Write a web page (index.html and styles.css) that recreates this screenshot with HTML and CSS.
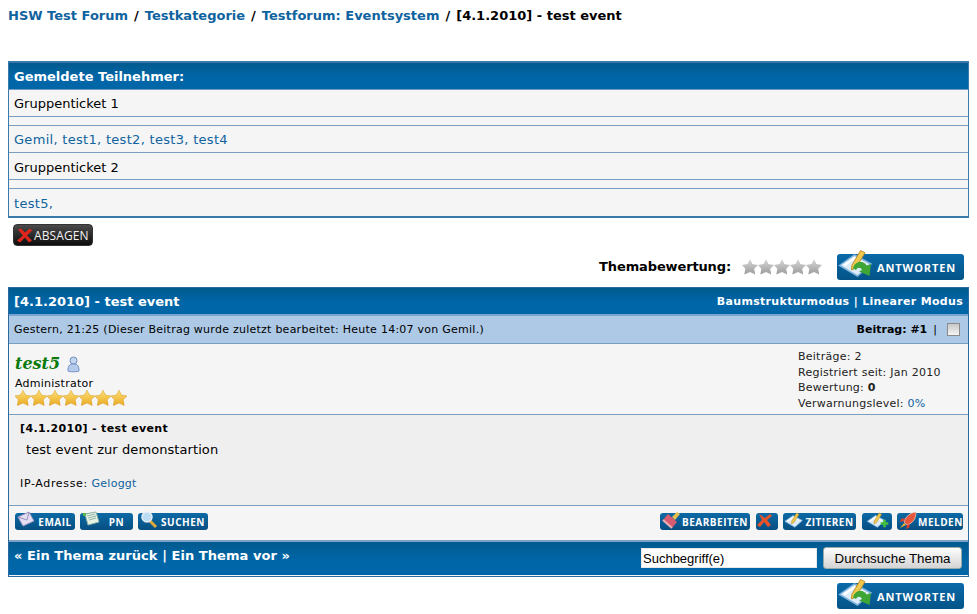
FILE: index.html
```html
<!DOCTYPE html>
<html lang="de">
<head>
<meta charset="utf-8">
<title>[4.1.2010] - test event</title>
<link rel="stylesheet" href="styles.css">
</head>
<body>
<svg class="defs" width="0" height="0" aria-hidden="true">
  <defs>
    <linearGradient id="gold" x1="0" y1="0" x2="0" y2="1"><stop offset="0" stop-color="#ffe27a"/><stop offset="1" stop-color="#e9a820"/></linearGradient>
    <linearGradient id="grey" x1="0" y1="0" x2="0" y2="1"><stop offset="0" stop-color="#d8d8d8"/><stop offset="1" stop-color="#9c9c9c"/></linearGradient>
    <symbol id="star" viewBox="0 0 16 16"><path d="M8 .2l2.500 4.900 5.500.8-3.800 3.900 1 5.700L8 13l-5.700 2.500 1-5.700L0 5.900l5.500-.8z"/></symbol>
    <symbol id="paper" viewBox="0 0 24 20"><path d="M1 11 11 4l11 6-9 8z" fill="#dcecfa" stroke="#7fb2dc"/><path d="M4 11l7-5 7 4" fill="none" stroke="#fff" stroke-width="1.500"/></symbol>
    <symbol id="pencil" viewBox="0 0 24 20"><path d="M15 1l3 1.500-6 10-3 1.500.2-3z" fill="#f0c850" stroke="#b98a20" stroke-width=".6"/></symbol>
    <symbol id="reply" viewBox="0 0 24 20"><use href="#paper"/><use href="#pencil"/><path d="M10 13c1-5 7-6 9-2l3-1-1 8-7-3 2-1c-1-2-3-2-4 0z" fill="#3fa535"/></symbol>
  </defs>
</svg>
<div class="page">
  <nav class="crumbs"><a href="#">HSW Test Forum</a><span class="sep">/</span><a href="#">Testkategorie</a><span class="sep">/</span><a href="#">Testforum: Eventsystem</a><span class="sep">/</span><span class="current">[4.1.2010] - test event</span></nav>

  <section class="box attendees">
    <h2 class="bar">Gemeldete Teilnehmer:</h2>
    <div class="row">Gruppenticket 1</div>
    <div class="spacer"></div>
    <div class="row"><a class="names" href="#">Gemil, test1, test2, test3, test4</a></div>
    <div class="row tall">Gruppenticket 2</div>
    <div class="spacer"></div>
    <div class="row last"><a class="names" href="#">test5,</a></div>
  </section>

  <div class="cancel-line">
    <a class="btn-cancel" href="#">
      <svg width="16" height="15" viewBox="0 0 16 14"><path d="M1 1l3-1 4 4 5-4 2 2-5 5 5 5-3 2-4-5-5 5-3-2 6-5z" fill="#e0261c"/></svg>
      ABSAGEN
    </a>
  </div>

  <div class="rating-line">
    <strong class="rating-label">Themabewertung:</strong>
    <span class="stars grey">
      <svg><use href="#star"/></svg><svg><use href="#star"/></svg><svg><use href="#star"/></svg><svg><use href="#star"/></svg><svg><use href="#star"/></svg>
    </span>
    <a class="btn-big" href="#">
      <svg class="big-icon" width="36" height="30"><use href="#reply"/></svg>
      <span>ANTWORTEN</span>
    </a>
  </div>

  <section class="box post">
    <header class="bar post-head">
      <strong>[4.1.2010] - test event</strong>
      <span class="modes"><a href="#">Baumstrukturmodus</a> | <a href="#">Linearer Modus</a></span>
    </header>
    <div class="meta">
      <span class="wide">Gestern, 21:25 (Dieser Beitrag wurde zuletzt bearbeitet: Heute 14:07 von Gemil.)</span>
      <span class="meta-right"><strong>Beitrag: #1</strong> <i class="pipe">|</i> <input class="check" type="checkbox" aria-label="auswählen"></span>
    </div>
    <div class="profile">
      <div class="author">
        <div class="name-line"><a class="name" href="#">test5</a>
          <svg width="13" height="17" viewBox="0 0 13 17"><circle cx="6.500" cy="4.500" r="3.500" fill="#c3d5ef" stroke="#6f8fc4"/><path d="M1 15c0-6 2-7 5.500-7s5.500 1 5.500 7c0 1-11 1-11 0z" fill="#b4cbec" stroke="#6f8fc4"/></svg>
        </div>
        <div class="role wide">Administrator</div>
        <div class="stars gold">
          <svg><use href="#star"/></svg><svg><use href="#star"/></svg><svg><use href="#star"/></svg><svg><use href="#star"/></svg><svg><use href="#star"/></svg><svg><use href="#star"/></svg><svg><use href="#star"/></svg>
        </div>
      </div>
      <ul class="stats wide">
        <li>Beiträge: 2</li>
        <li>Registriert seit: Jan 2010</li>
        <li>Bewertung: <b>0</b></li>
        <li>Verwarnungslevel: <a href="#">0%</a></li>
      </ul>
    </div>
    <div class="content">
      <strong class="subject">[4.1.2010] - test event</strong>
      <p class="message">test event zur demonstartion</p>
      <p class="ip"><span class="ip-label">IP-Adresse:</span> <a href="#">Geloggt</a></p>
    </div>
    <div class="actions">
      <div class="group">
        <a class="btn w60" href="#"><svg width="20" height="18" viewBox="0 0 20 18"><path d="M2 6l11-5 5 9-11 5z" fill="#e4dff0" stroke="#9a93c0"/><path d="M2 6l9 3 2-8" fill="none" stroke="#9a93c0"/></svg><span>EMAIL</span></a>
        <a class="btn w53" href="#"><svg width="20" height="18" viewBox="0 0 20 18"><path d="M4 3l11-2 3 10-11 3z" fill="#e8f3e4" stroke="#8eb3a8"/><path d="M6 5l8-2M7 7l8-2M8 9l7-2" stroke="#8eb3a8"/><rect x="2" y="2" width="3" height="3" fill="#58b848"/></svg><span>PN</span></a>
        <a class="btn w70" href="#"><svg width="20" height="18" viewBox="0 0 20 18"><path d="M11 10l6 6" stroke="#e0a838" stroke-width="3"/><circle cx="8" cy="6" r="5" fill="#bcdcf4" stroke="#e6eef6" stroke-width="1.500"/></svg><span>SUCHEN</span></a>
      </div>
      <div class="group right">
        <a class="btn w90" href="#"><svg width="20" height="18" viewBox="0 0 20 18"><path d="M2 9l5-6 9 8-5 6z" fill="#d85c70"/><path d="M11 6l5-5 3 2-5 6z" fill="#e8c050"/><path d="M2 9l9 8" stroke="#f2b0b8" stroke-width="2"/></svg><span>BEARBEITEN</span></a>
        <a class="btn w22" href="#" aria-label="Löschen"><svg width="16" height="14" viewBox="0 0 16 14"><path d="M2 1l6 4 5-4 2 2-5 4 4 5-3 2-4-5-4 5-3-2 5-5z" fill="#e8532a"/></svg></a>
        <a class="btn w73" href="#"><svg width="20" height="17" viewBox="0 0 24 20"><use href="#paper"/><use href="#pencil"/></svg><span>ZITIEREN</span></a>
        <a class="btn w30" href="#"><svg width="27" height="17" viewBox="0 0 32 20"><use href="#paper"/><use href="#pencil"/><path d="M24 9h3v3h3v3h-3v3h-3v-3h-3v-3h3z" fill="#44c040"/></svg></a>
        <a class="btn w66" href="#"><svg width="20" height="18" viewBox="0 0 20 18"><path d="M18 1c-6 1-10 4-12 10l3 3c6-2 9-6 9-13z" fill="#e8563c" stroke="#f0c8b8" stroke-width=".8"/><path d="M7 7l-4 1-1 3 4-1zM12 13l-1 4-3 1 1-4z" fill="#d8402c"/><path d="M6 12l-4 5 6-3z" fill="#f0b030"/></svg><span>MELDEN</span></a>
      </div>
    </div>
    <footer class="bar post-foot">
      <strong class="pager"><a href="#">« Ein Thema zurück</a> | <a href="#">Ein Thema vor »</a></strong>
      <form class="search">
        <input class="search-input" type="text" value="Suchbegriff(e)">
        <button class="search-btn" type="button">Durchsuche Thema</button>
      </form>
    </footer>
  </section>

  <div class="reply-bottom">
    <a class="btn-big" href="#">
      <svg class="big-icon" width="36" height="30"><use href="#reply"/></svg>
      <span>ANTWORTEN</span>
    </a>
  </div>
</div>
</body>
</html>
```
FILE: styles.css
```css
* { box-sizing: border-box; }
html, body { margin: 0; padding: 0; background: #fff; }
body { font: 13px/16px "DejaVu Sans", Verdana, sans-serif; color: #000; }
a { color: #0f639f; text-decoration: none; }
.defs { position: absolute; }
.page { padding: 0 8px; width: 977px; height: 614px; overflow: hidden; }
.wide { letter-spacing: .25px; }

.crumbs { height: 61px; padding-top: 8px; font-weight: bold; font-size: 13px; }
.current { color: #000; }
.sep { padding: 0 6px; }

.box { border: 1px solid #2f6a9c; background: #f5f5f5; width: 961px; }
.attendees { height: 157px; border-width: 2px 1px 2px; border-color: #3a7aaa; }
.bar { background: linear-gradient(#025a8e, #0066a8 55%); color: #fff; }
.bar a { color: #fff; }
h2.bar { margin: 0; height: 27px; font-size: 13px; line-height: 27px; padding-left: 5px; border-bottom: 1px solid #6f9cc4; }
.row { height: 27px; line-height: 28px; padding-left: 5px; border-bottom: 1px solid #7b9fc0; }
.row.tall { line-height: 29px; }
.row.last { border-bottom: 0; line-height: 29px; }
.spacer { height: 9px; border-bottom: 1px solid #7b9fc0; }
.names { letter-spacing: .3px; }

.cancel-line { height: 36px; padding: 6px 0 0 5px; }
.btn-cancel { display: flex; align-items: center; gap: 1px; width: 80px; height: 22px; padding-left: 3px; border-radius: 4px; background: linear-gradient(#4a4a4a, #0c0c0c); border: 1px solid #333; color: #f2f2f2; font: 12px "Open Sans", sans-serif; letter-spacing: .1px; }

.rating-line { height: 33px; display: flex; align-items: center; justify-content: flex-end; padding-right: 5px; padding-bottom: 7px; }
.rating-label { margin-right: 11px; letter-spacing: -.13px; }
.stars { display: flex; }
.stars svg { width: 16px; height: 16px; }
.stars.grey { fill: url(#grey); margin-right: 15px; }
.stars.gold { fill: url(#gold); stroke: #d89a20; stroke-width: .5; }
.btn-big { display: flex; align-items: center; width: 127px; height: 26px; border-radius: 3px; background: linear-gradient(#0a6aa8, #045488); color: #fff; font: bold 11px "Open Sans", sans-serif; letter-spacing: .9px; padding-left: 1px; }
.btn-big span { margin-left: 3px; }
.big-icon { margin-top: -6px; flex: none; }

.post { height: 290px; border-color: #2a6a9c; }
.post-head { height: 28px; display: flex; justify-content: space-between; align-items: center; padding: 2px 5px 0; border-bottom: 2px solid #7ba4cc; }
.modes { font-weight: bold; font-size: 11px; letter-spacing: .32px; }
.meta { height: 28px; display: flex; justify-content: space-between; align-items: center; padding: 0 8px 0 5px; background: #adc9e6; font-size: 11px; border-bottom: 1px solid #7b9fc0; }
.meta-right { display: flex; align-items: center; gap: 6px; }
.pipe { font-style: normal; }
.check { margin: 0 0 0 4px; width: 13px; height: 13px; appearance: none; background: linear-gradient(#c8c8c8, #f4f4f4); border: 1px solid #8a8a8a; }
.profile { height: 71px; display: flex; justify-content: space-between; padding: 4px 0 0 6px; border-bottom: 1px solid #7b9fc0; }
.name-line { display: flex; align-items: flex-end; gap: 7px; height: 25px; }
.name { color: #0a7a0a; font: italic bold 16px/18px "DejaVu Serif", serif; }
.role { font-size: 11px; line-height: 15px; margin-top: 3px; margin-bottom: -1px; }
.stats { margin: 1px 27px 0 0; padding: 0; list-style: none; width: 143px; font-size: 11px; line-height: 15.500px; color: #222; }
.content { height: 91px; padding: 7px 0 0 11px; background: #efefef; border-bottom: 1px solid #7b9fc0; }
.subject { display: block; font-size: 11px; line-height: 14px; letter-spacing: .35px; }
.message { margin: 6px 0 0 6px; font-size: 13px; line-height: 16px; letter-spacing: .08px; }
.ip { margin: 19px 0 0; font-size: 11px; line-height: 14px; letter-spacing: .25px; }
.ip-label { letter-spacing: .65px; }
.actions { height: 35px; display: flex; justify-content: space-between; padding: 7px 5px 0 6px; border-bottom: 1px solid #7b9fc0; }
.group { display: flex; gap: 5px; }
.group.right { gap: 5.500px; }
.btn { display: flex; align-items: center; height: 17px; border-radius: 3px; background: linear-gradient(#0c6aa6, #064f82); color: #fff; font: bold 10px "Open Sans", sans-serif; letter-spacing: .5px; padding-left: 1px; }
.btn svg { flex: none; margin-top: -3px; }
.btn span { flex: 1; text-align: center; padding-right: 1px; }
.w60 { width: 60px; } .w53 { width: 53px; } .w70 { width: 70px; } .w90 { width: 90px; }
.w22 { width: 22px; } .w73 { width: 73px; } .w30 { width: 30px; } .w66 { width: 66px; }
.post-foot { height: 34px; display: flex; justify-content: space-between; align-items: flex-start; padding: 5px 6px 0 5px; border-top: 1px solid #7ba4cc; }
.pager { line-height: 16px; margin-top: 1px; letter-spacing: .05px; }
.search { display: flex; gap: 6px; }
.search-input { width: 176px; height: 20px; margin-top: 1px; border: 1px solid #e8e8e8; padding: 0 1px; font: 13px "Liberation Sans", sans-serif; color: #000; }
.search-btn { width: 139px; height: 22px; border: 1px solid #9aa; border-radius: 3px; background: linear-gradient(#fdfdfd, #d4d4d4); font: 13.300px "Liberation Sans", sans-serif; color: #000; padding: 0; }
.reply-bottom { display: flex; justify-content: flex-end; padding: 6px 5px 0 0; }
```
